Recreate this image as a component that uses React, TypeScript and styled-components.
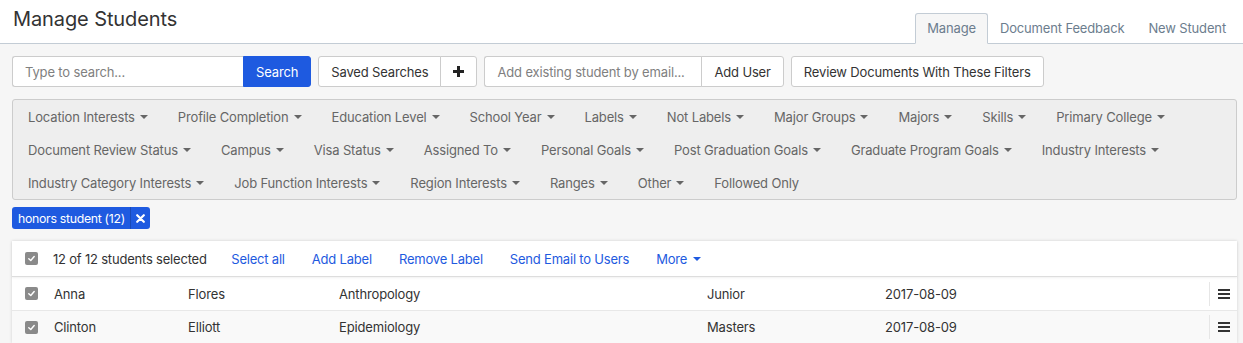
import React from "react";
import styled, { createGlobalStyle } from "styled-components";

const Global = createGlobalStyle`
  html, body { margin: 0; padding: 0; }
  body {
    background: #f6f6f6;
    font-family: Inter, "Noto Sans", "Liberation Sans", sans-serif;
    font-size: 13px;
    letter-spacing: -0.15px;
    color: #333;
  }
  * { box-sizing: border-box; }
`;

const Page = styled.div`
  width: 1243px;
  min-height: 343px;
  overflow: hidden;
`;

const Header = styled.header`
  height: 44px;
  background: #fff;
  border-bottom: 1px solid #c3ccd5;
  display: flex;
  align-items: flex-end;
  justify-content: space-between;
  padding: 0 5px 0 13px;
`;

const Title = styled.h1`
  margin: 0;
  align-self: flex-start;
  padding-top: 6px;
  font-size: 20px;
  font-weight: 400;
  line-height: 26px;
  letter-spacing: -0.1px;
  color: #333;
`;

const Tabs = styled.nav`
  display: flex;
  align-items: flex-end;
  margin-bottom: -1px;
`;

const Tab = styled.div<{ $active?: boolean }>`
  height: 31px;
  padding: 0 11px 1px;
  display: flex;
  align-items: center;
  font-size: 13px;
  color: #6c7d8e;
  border: 1px solid ${(p) => (p.$active ? "#c3ccd5" : "transparent")};
  border-bottom-color: ${(p) => (p.$active ? "#f6f6f6" : "transparent")};
  background: ${(p) => (p.$active ? "#f6f6f6" : "transparent")};
  border-radius: 3px 3px 0 0;
`;

const Content = styled.main`
  padding: 12px 6px 0 12px;
`;

const Toolbar = styled.div`
  display: flex;
  gap: 7px;
  height: 31px;
`;

const Group = styled.div`
  display: flex;
  height: 31px;
`;

const Input = styled.div<{ $w: number }>`
  width: ${(p) => p.$w}px;
  height: 31px;
  background: #fff;
  border: 1px solid #ccc;
  border-right: none;
  border-radius: 3px 0 0 3px;
  display: flex;
  align-items: center;
  padding-left: 12px;
  color: #808080;
  font-size: 13px;
`;

const Button = styled.div<{ $primary?: boolean; $pos?: "left" | "right" | "solo" }>`
  height: 31px;
  padding: 0 12px;
  display: flex;
  align-items: center;
  font-size: 13px;
  color: ${(p) => (p.$primary ? "#fff" : "#333")};
  background: ${(p) => (p.$primary ? "#1e5ae0" : "#fff")};
  border: 1px solid ${(p) => (p.$primary ? "#1e5ae0" : "#ccc")};
  border-radius: ${(p) =>
    p.$pos === "left" ? "3px 0 0 3px" : p.$pos === "right" ? "0 3px 3px 0" : "3px"};
  ${(p) => (p.$pos === "right" ? "margin-left: -1px;" : "")}
`;

const FilterPanel = styled.div`
  margin-top: 12px;
  background: #eee;
  border: 1px solid #ccc;
  border-radius: 3px;
  display: flex;
  flex-wrap: wrap;
`;

const Filter = styled.div`
  height: 33px;
  padding: 0 15px;
  display: flex;
  align-items: center;
  gap: 5px;
  color: #666;
  font-size: 13px;
  white-space: nowrap;
`;

const Caret = styled.span<{ $color?: string }>`
  display: inline-block;
  width: 0;
  height: 0;
  border-left: 4px solid transparent;
  border-right: 4px solid transparent;
  border-top: 4px solid ${(p) => p.$color || "#666"};
  margin-top: 1px;
`;

const TagRow = styled.div`
  margin-top: 7px;
  display: flex;
`;

const Tag = styled.div`
  height: 22px;
  background: #1e5ae0;
  border-radius: 3px;
  color: #fff;
  font-size: 12.3px;
  letter-spacing: -0.3px;
  display: flex;
  align-items: center;
`;

const TagText = styled.span`
  padding: 0 5px 0 6px;
`;

const TagClose = styled.span`
  height: 22px;
  width: 20px;
  border-left: 1px solid rgba(0, 0, 0, 0.18);
  display: flex;
  align-items: center;
  justify-content: center;
`;

const TablePanel = styled.section`
  margin-top: 12px;
  background: #fff;
  box-shadow: 0 0 3px rgba(0, 0, 0, 0.15);
`;

const ActionBar = styled.div`
  height: 36px;
  display: flex;
  align-items: center;
  padding-left: 13px;
  border-bottom: 1px solid #ddd;
  box-shadow: 0 1px 2px rgba(0, 0, 0, 0.06);
  position: relative;
  letter-spacing: -0.2px;
`;

const Count = styled.span`
  margin-left: 15px;
  margin-right: 11px;
  color: #333;
`;

const Link = styled.span`
  color: #1e5ae0;
  padding: 0 13.5px;
  display: flex;
  align-items: center;
  gap: 6px;
`;

const Row = styled.div<{ $alt?: boolean }>`
  height: 33px;
  display: grid;
  grid-template-columns: 29px 134px 151px 368px 178px 1fr 28px;
  align-items: center;
  padding-left: 13px;
  background: ${(p) => (p.$alt ? "#f9f9f9" : "#fff")};
  border-top: ${(p) => (p.$alt ? "1px solid #e8e8e8" : "none")};
  color: #333;
  font-size: 13px;
`;

const MenuCell = styled.div`
  height: 24px;
  border-left: 1px solid #e6e6e6;
  display: flex;
  align-items: center;
  justify-content: center;
`;

const Box = styled.span`
  width: 13px;
  height: 13px;
  border-radius: 2px;
  background: #8a8a8a;
  display: inline-flex;
  align-items: center;
  justify-content: center;
`;

const Check = () => (
  <Box>
    <svg width="9" height="9" viewBox="0 0 10 10">
      <path d="M2 5.2 L4.2 7.2 L8 2.8" fill="none" stroke="#fff" strokeWidth="1.6" strokeLinecap="round" strokeLinejoin="round" />
    </svg>
  </Box>
);

const Hamburger = () => (
  <svg width="12" height="10" viewBox="0 0 12 10">
    <rect x="0" y="0" width="12" height="2" fill="#333" />
    <rect x="0" y="4" width="12" height="2" fill="#333" />
    <rect x="0" y="8" width="12" height="2" fill="#333" />
  </svg>
);

const Plus = () => (
  <svg width="11" height="11" viewBox="0 0 11 11">
    <rect x="4" y="0" width="3" height="11" fill="#222" />
    <rect x="0" y="4" width="11" height="3" fill="#222" />
  </svg>
);

const Times = () => (
  <svg width="9" height="9" viewBox="0 0 9 9">
    <path d="M1.2 1.2 L7.8 7.8 M7.8 1.2 L1.2 7.8" stroke="#fff" strokeWidth="2.2" strokeLinecap="round" />
  </svg>
);

const filters: { label: string; caret: boolean }[] = [
  "Location Interests",
  "Profile Completion",
  "Education Level",
  "School Year",
  "Labels",
  "Not Labels",
  "Major Groups",
  "Majors",
  "Skills",
  "Primary College",
  "Document Review Status",
  "Campus",
  "Visa Status",
  "Assigned To",
  "Personal Goals",
  "Post Graduation Goals",
  "Graduate Program Goals",
  "Industry Interests",
  "Industry Category Interests",
  "Job Function Interests",
  "Region Interests",
  "Ranges",
  "Other",
].map((label) => ({ label, caret: true }));
filters.push({ label: "Followed Only", caret: false });

const students = [
  { first: "Anna", last: "Flores", major: "Anthropology", year: "Junior", date: "2017-08-09" },
  { first: "Clinton", last: "Elliott", major: "Epidemiology", year: "Masters", date: "2017-08-09" },
];

export default function App() {
  return (
    <Page>
      <Global />
      <Header>
        <Title>Manage Students</Title>
        <Tabs>
          <Tab $active>Manage</Tab>
          <Tab>Document Feedback</Tab>
          <Tab>New Student</Tab>
        </Tabs>
      </Header>
      <Content>
        <Toolbar>
          <Group>
            <Input $w={232}>Type to search...</Input>
            <Button $primary $pos="right">Search</Button>
          </Group>
          <Group>
            <Button $pos="left">Saved Searches</Button>
            <Button $pos="right">
              <Plus />
            </Button>
          </Group>
          <Group>
            <Input $w={218}>Add existing student by email...</Input>
            <Button $pos="right">Add User</Button>
          </Group>
          <Button $pos="solo">Review Documents With These Filters</Button>
        </Toolbar>
        <FilterPanel>
          {filters.map((f) => (
            <Filter key={f.label}>
              {f.label}
              {f.caret && <Caret />}
            </Filter>
          ))}
        </FilterPanel>
        <TagRow>
          <Tag>
            <TagText>honors student (12)</TagText>
            <TagClose>
              <Times />
            </TagClose>
          </Tag>
        </TagRow>
        <TablePanel>
          <ActionBar>
            <Check />
            <Count>12 of 12 students selected</Count>
            <Link>Select all</Link>
            <Link>Add Label</Link>
            <Link>Remove Label</Link>
            <Link>Send Email to Users</Link>
            <Link>
              More <Caret $color="#1e5ae0" />
            </Link>
          </ActionBar>
          {students.map((s, i) => (
            <Row key={s.first} $alt={i % 2 === 1}>
              <Check />
              <span>{s.first}</span>
              <span>{s.last}</span>
              <span>{s.major}</span>
              <span>{s.year}</span>
              <span>{s.date}</span>
              <MenuCell>
                <Hamburger />
              </MenuCell>
            </Row>
          ))}
        </TablePanel>
      </Content>
    </Page>
  );
}
